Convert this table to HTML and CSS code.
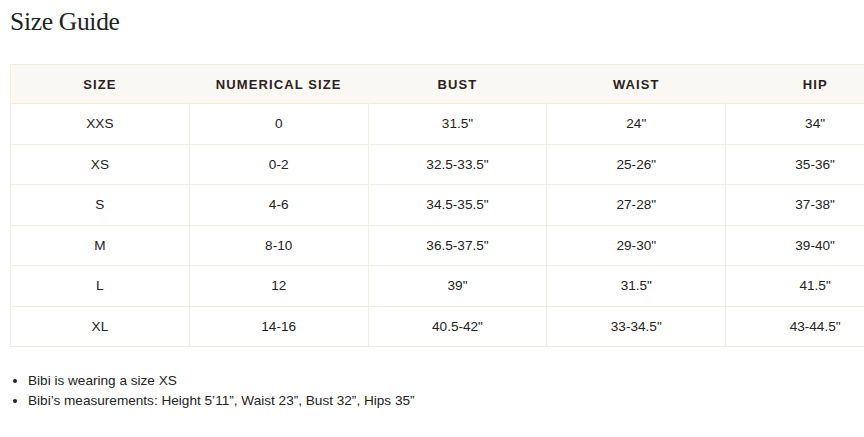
FILE: index.html
```html
<!DOCTYPE html>
<html>
<head>
<meta charset="utf-8">
<link rel="stylesheet" href="styles.css">
</head>
<body>
<div class="page">
  <h1 class="title">Size Guide</h1>
  <table class="sizes">
    <thead>
      <tr><th>SIZE</th><th>NUMERICAL SIZE</th><th>BUST</th><th>WAIST</th><th>HIP</th></tr>
    </thead>
    <tbody>
      <tr><td>XXS</td><td>0</td><td>31.5"</td><td>24"</td><td>34"</td></tr>
      <tr><td>XS</td><td>0-2</td><td>32.5-33.5"</td><td>25-26"</td><td>35-36"</td></tr>
      <tr><td>S</td><td>4-6</td><td>34.5-35.5"</td><td>27-28"</td><td>37-38"</td></tr>
      <tr><td>M</td><td>8-10</td><td>36.5-37.5"</td><td>29-30"</td><td>39-40"</td></tr>
      <tr><td>L</td><td>12</td><td>39"</td><td>31.5"</td><td>41.5"</td></tr>
      <tr><td>XL</td><td>14-16</td><td>40.5-42"</td><td>33-34.5"</td><td>43-44.5"</td></tr>
    </tbody>
  </table>
  <ul class="notes">
    <li>Bibi is wearing a size XS</li>
    <li>Bibi’s measurements: Height 5’11”, Waist 23”, Bust 32”, Hips 35”</li>
  </ul>
</div>
</body>
</html>
```
FILE: styles.css
```css
html, body {
  margin: 0;
  padding: 0;
  background: #fff;
  overflow: hidden;
}
.page {
  padding: 0 10px;
  width: 895px;
  font-family: "Liberation Sans", Arial, sans-serif;
  color: #222;
}
.title {
  margin: 0;
  padding-top: 8px;
  height: 64px;
  box-sizing: border-box;
  font-family: "Liberation Serif", "Times New Roman", serif;
  font-weight: 400;
  font-size: 25.5px;
  line-height: 28px;
  color: #222;
  letter-spacing: -0.3px;
}
.sizes {
  border-collapse: collapse;
  width: 895px;
  table-layout: fixed;
  font-size: 13.6px;
}
.sizes th {
  background: #faf8f3;
  height: 38px;
  padding: 0;
  font-weight: 700;
  letter-spacing: 1.1px;
  font-size: 13px;
  color: #2a2220;
  border-top: 1px solid #f0ede2;
  border-left: 1px solid #faf8f3;
}
.sizes th:first-child { border-left: 1px solid #f0ede2; }
.sizes td {
  height: 39.5px;
  padding: 0;
  text-align: center;
  border: 1px solid #f0ede2;
  color: #222;
}
.notes {
  margin: 24px 0 0 0;
  padding-left: 18px;
  font-size: 13.6px;
  line-height: 20px;
  color: #222;
}
```
